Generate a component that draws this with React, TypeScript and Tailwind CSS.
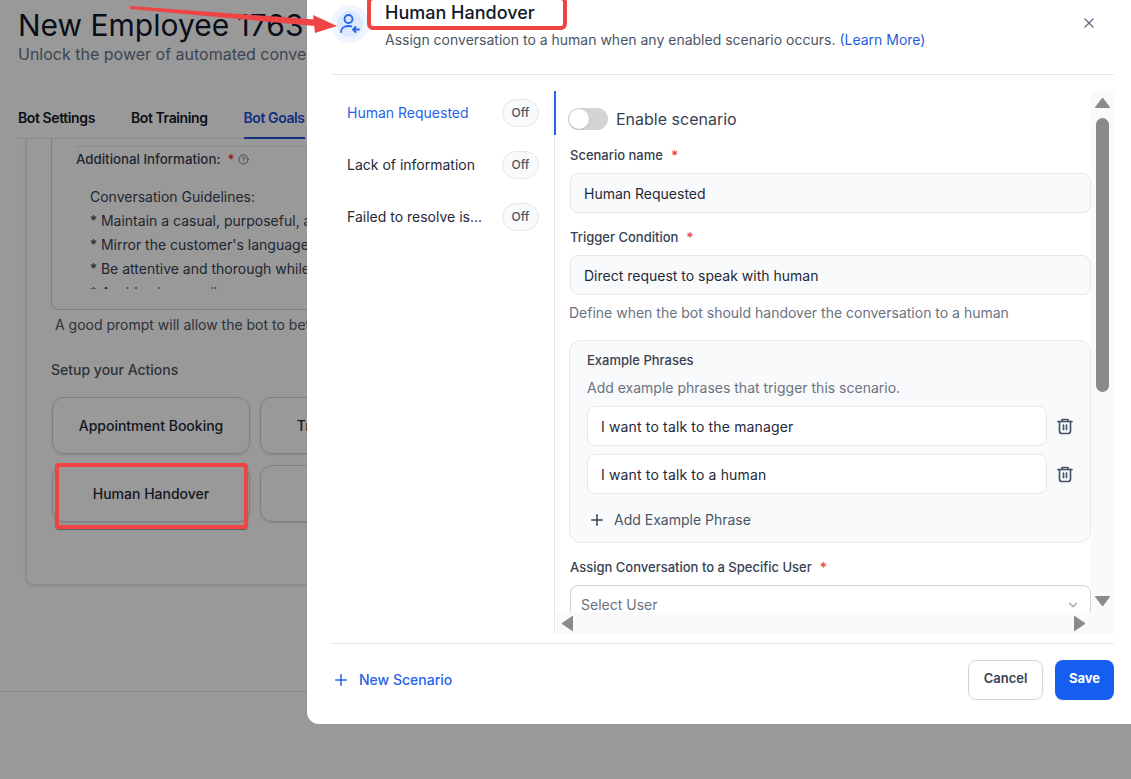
import React from "react";
import { Plus, X, ChevronDown, CircleHelp } from "lucide-react";

const font = { fontFamily: "Inter, 'Noto Sans', sans-serif" };

const Tri = ({ dir, className }: { dir: "up" | "down" | "left" | "right"; className?: string }) => {
  const points = {
    up: "7.5,0 15,10 0,10",
    down: "0,0 15,0 7.5,10",
    left: "11,0 11,15 0,7.5",
    right: "0,0 11,7.5 0,15",
  }[dir];
  const vertical = dir === "up" || dir === "down";
  return (
    <svg width={vertical ? 15 : 11} height={vertical ? 10 : 15} className={className}>
      <polygon points={points} fill="#8a8a8a" stroke="#8a8a8a" strokeLinejoin="round" />
    </svg>
  );
};

const TrashIcon = () => (
  <svg width="18" height="18" viewBox="0 0 18 18" fill="none" stroke="#475569" strokeWidth="1.7" strokeLinecap="round" strokeLinejoin="round" className="-mt-px">
    <path d="M2 4.5h14" />
    <path d="M6 4.5V2.5h6v2" />
    <path d="M3.5 4.5v9.5a2.5 2.5 0 0 0 2.5 2.5h6a2.5 2.5 0 0 0 2.5-2.5V4.5" />
    <path d="M7.5 8v4.5M10.5 8v4.5" />
  </svg>
);

const BackgroundPage = () => (
  <div className="h-full bg-white">
    <div className="h-[692px] border-b border-[#e5e7eb] pl-[18px]">
      <h1 className="whitespace-nowrap pt-[7px] text-[30px] leading-[36px] text-[#0f172a]">New Employee 1763</h1>
      <p className="whitespace-nowrap text-base leading-[22px] text-[#64748b]">Unlock the power of automated conversations</p>
      <div className="mt-[43px] flex h-[31px] gap-9 border-b border-[#e5e7eb] text-sm font-semibold tracking-[-0.4px] text-[#111827]">
        <span>Bot Settings</span>
        <span>Bot Training</span>
        <span className="h-[31px] border-b-2 border-[#1d4ed8] text-[#1d4ed8]">Bot Goals</span>
      </div>
      <div className="ml-2 h-[446px] w-[600px] rounded-b-lg border border-t-0 border-[#e2e8f0] pl-6 shadow-sm">
        <div className="h-[171px] w-[500px] rounded-b-lg border border-t-0 border-[#cbd5e1] pl-6 pt-[7px]">
          <div className="flex h-[26px] items-center gap-[7px] border-t border-[#e2e8f0] text-[13.3px] font-medium text-[#374151]">
            Additional Information:
            <span className="text-[#dc2626]">*</span>
            <CircleHelp size={11} className="-ml-[3px] text-[#6b7280]" />
          </div>
          <div className="ml-[14px] mt-[13px] h-[104px] overflow-hidden whitespace-nowrap text-sm leading-6 text-[#374151]">
            <p>Conversation Guidelines:</p>
            <p>* Maintain a casual, purposeful, and friendly tone</p>
            <p>* Mirror the customer's language and style</p>
            <p>* Be attentive and thorough while answering</p>
            <p>* Avoid using emojis</p>
          </div>
        </div>
        <p className="ml-1 mt-[5px] whitespace-nowrap text-sm text-[#4b5563]">A good prompt will allow the bot to better respond</p>
        <p className="mt-[25px] text-sm font-medium text-[#4b5563]">Setup your Actions</p>
        <div className="mt-[17px] grid w-[420px] grid-cols-[198px_198px] gap-x-[10px] gap-y-[11px] pl-px text-sm font-medium text-[#1f2937]">
          <div className="flex h-[57px] items-center justify-center rounded-xl border border-[#cbd5e1] shadow-sm">Appointment Booking</div>
          <div className="flex h-[57px] items-center justify-center rounded-xl border border-[#cbd5e1] shadow-sm">Transfer to Human</div>
          <div className="flex h-[57px] items-center justify-center rounded-xl border border-[#cbd5e1] shadow-sm">Human Handover</div>
          <div className="flex h-[57px] items-center justify-center rounded-xl border border-[#cbd5e1] shadow-sm"></div>
        </div>
      </div>
    </div>
  </div>
);

const scenarios = ["Human Requested", "Lack of information", "Failed to resolve is..."];

const Field = ({ label, value }: { label: string; value: string }) => (
  <div>
    <label className="flex h-[20px] items-center gap-2 pt-[2px] text-[13px] font-medium text-[#374151]">
      {label}
      <span className="text-sm text-[#ef4444]">*</span>
    </label>
    <div className="mt-2 flex h-10 items-center rounded-lg border border-[#e5e7eb] bg-[#f9fafb] px-[13px] pt-px text-sm text-[#1f2937]">{value}</div>
  </div>
);

const Phrase = ({ value }: { value: string }) => (
  <div className="flex items-center gap-[9px]">
    <div className="flex h-10 w-[460px] items-center rounded-lg border border-[#e5e7eb] bg-white px-[13px] pt-[2px] text-sm tracking-[0.15px] text-[#1f2937]">{value}</div>
    <TrashIcon />
  </div>
);

const Modal = () => (
  <div className="absolute left-[307px] top-0 flex h-[724px] w-[824px] flex-col rounded-bl-xl bg-white pl-6 pr-[17px]" style={font}>
    <div className="relative flex h-[75px] shrink-0 gap-4 border-b border-[#e5e7eb] pt-[5px]">
      <div className="flex h-[38px] w-[38px] items-center justify-center rounded-full bg-[#eff4ff]">
        <div className="flex h-[26px] w-[26px] items-center justify-center rounded-full bg-[#dbe8fe]">
          <svg width="22" height="22" viewBox="0 0 22 22" fill="none" stroke="#2563eb" strokeWidth="1.8" strokeLinecap="round" strokeLinejoin="round">
            <circle cx="9.5" cy="6" r="4" />
            <path d="M2 19c0-3.6 3-6 7.5-6 1 0 2 .1 2.8.4" />
            <path d="M20 16.5h-6M16.5 14l-2.5 2.5 2.5 2.5" />
          </svg>
        </div>
      </div>
      <div className="-mt-[4px]">
        <h2 className="text-lg font-medium leading-[24px] text-[#111827]">Human Handover</h2>
        <p className="mt-[5px] text-sm leading-5 text-[#4b5563]">
          Assign conversation to a human when any enabled scenario occurs. <span className="text-[#1d5fe0]">(Learn More)</span>
        </p>
      </div>
      <X size={16} className="absolute right-[17px] top-[15px] text-[#64748b]" />
    </div>

    <div className="mt-4 flex h-[543px] shrink-0">
      <div className="w-[224px] shrink-0 border-r border-[#e5e7eb] pt-2">
        {scenarios.map((name, i) => (
          <div key={name} className="mb-6 flex h-[28px] items-center justify-between pl-4 pr-[15px] text-sm">
            <span className={i === 0 ? "text-[#2563eb]" : "text-[#1f2937]"}>{name}</span>
            <span className="flex h-[28px] w-[37px] items-center justify-center rounded-full border border-[#e5e7eb] bg-[#f9fafb] text-xs font-medium text-[#4b5563]">Off</span>
          </div>
        ))}
      </div>
      <div className="-ml-px h-11 w-[2px] shrink-0 bg-[#2563eb]" />
      <div className="grid min-w-0 flex-1 grid-cols-[1fr_23px] grid-rows-[1fr_22px]">
        <div className="min-h-0 overflow-hidden pl-[14px] pt-[17px]">
          <div className="-ml-[2px] flex h-[22px] items-center gap-2">
            <div className="flex h-[22px] w-10 items-center rounded-full bg-[#d4d4d4] pl-px">
              <div className="h-5 w-5 rounded-full bg-white shadow-sm" />
            </div>
            <span className="text-base text-[#374151]">Enable scenario</span>
          </div>
          <div className="mt-[15px]">
            <Field label="Scenario name" value="Human Requested" />
          </div>
          <div className="mt-[14px]">
            <Field label="Trigger Condition" value="Direct request to speak with human" />
          </div>
          <p className="-ml-px mt-2 text-sm leading-5 text-[#6b7280]">Define when the bot should handover the conversation to a human</p>
          <div className="-ml-px mt-[17px] h-[203px] rounded-xl border border-[#e5e7eb] bg-[#f9fafb] pl-[17px] pt-[9px]">
            <p className="text-[13px] font-medium leading-5 text-[#374151]">Example Phrases</p>
            <p className="mt-2 text-sm leading-5 text-[#6b7280]">Add example phrases that trigger this scenario.</p>
            <div className="mt-2 flex flex-col gap-2">
              <Phrase value="I want to talk to the manager" />
              <Phrase value="I want to talk to a human" />
            </div>
            <div className="mt-4 flex h-5 items-center gap-2 pl-px text-sm text-[#4b5563]">
              <Plus size={18} className="text-[#374151]" />
              Add Example Phrase
            </div>
          </div>
          <div className="mt-[14px]">
            <label className="flex h-5 items-center gap-2 pt-[2px] text-[13px] font-medium text-[#374151]">
              Assign Conversation to a Specific User
              <span className="text-sm text-[#ef4444]">*</span>
            </label>
            <div className="mt-2 flex h-10 items-center justify-between rounded-lg border border-[#cbd5e1] pl-[10px] pr-[10px] text-sm text-[#6b7280]">
              Select User
              <ChevronDown size={14} className="text-[#9ca3af]" />
            </div>
          </div>
        </div>
        <div className="flex flex-col items-center justify-between bg-[#fafafa] pb-[6px] pt-[7px]">
          <Tri dir="up" />
          <div className="mt-[10px] h-[274px] w-[13px] rounded-full bg-[#8a8a8a]" />
          <div className="flex-1" />
          <Tri dir="down" />
        </div>
        <div className="flex items-center justify-between bg-[#fafafa] px-[6px]">
          <Tri dir="left" />
          <Tri dir="right" />
        </div>
        <div className="bg-[#fafafa]" />
      </div>
    </div>

    <div className="mt-[9px] flex flex-1 items-center justify-between border-t border-[#e5e7eb] pb-2">
      <div className="flex items-center gap-[9px] pl-px text-sm font-medium text-[#2563eb]">
        <Plus size={18} />
        New Scenario
      </div>
      <div className="-mt-px flex gap-3">
        <button className="h-10 w-[75px] rounded-lg border border-[#d1d5db] bg-white pb-0.5 text-[13px] font-semibold text-[#374151]">Cancel</button>
        <button className="h-10 w-[59px] rounded-lg bg-[#155eef] pb-0.5 text-[13px] font-bold text-white">Save</button>
      </div>
    </div>
  </div>
);

const Annotations = () => (
  <>
    <div className="absolute left-[367px] top-[-4px] h-[34px] w-[200px] rounded-md border-4 border-[#ef4444]" />
    <div className="absolute left-[55px] top-[463px] h-[66px] w-[193px] rounded border-4 border-[#ef4444] shadow-[0_1px_1px_rgba(0,0,0,0.4)]" />
    <svg className="absolute left-[120px] top-0" width="230" height="40" viewBox="0 0 230 40">
      <polygon points="10,6 195,19.5 195,26 10,9" fill="#ef4444" />
      <polygon points="217,26 193,15 195,33" fill="#ef4444" />
    </svg>
  </>
);

export default function App() {
  return (
    <div className="relative h-[779px] w-[1131px] overflow-hidden" style={font}>
      <BackgroundPage />
      <div className="absolute inset-0 bg-black/40" />
      <Modal />
      <Annotations />
    </div>
  );
}
